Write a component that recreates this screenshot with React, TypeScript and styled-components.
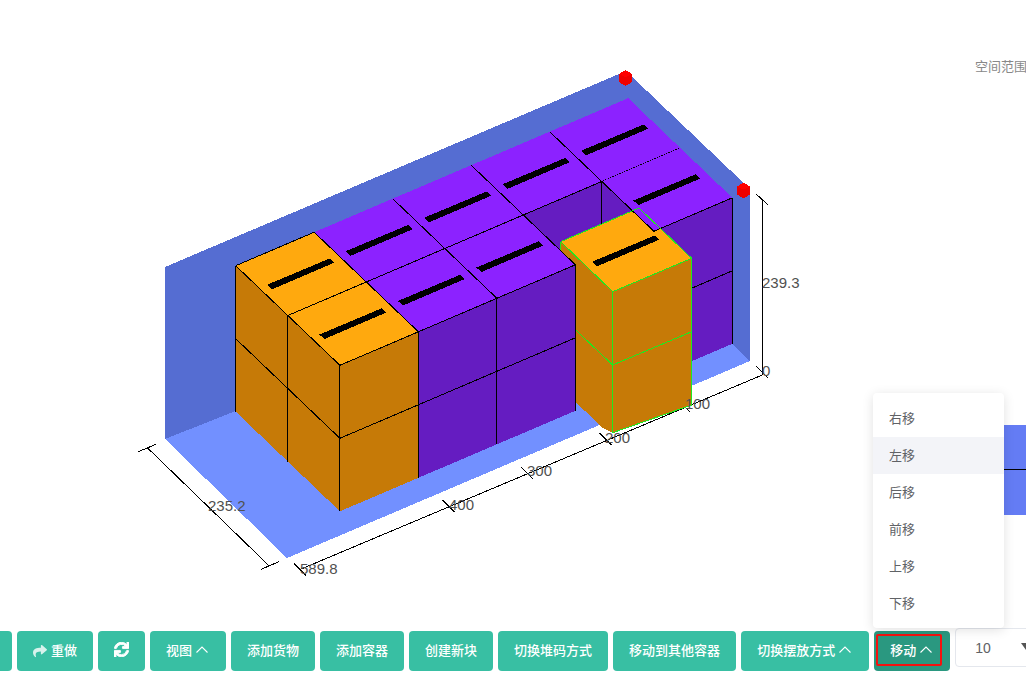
import React from "react";
import styled, { createGlobalStyle } from "styled-components";
import { FaShare, FaReply, FaSync } from "react-icons/fa";

const GlobalStyle = createGlobalStyle`
  html, body {
    margin: 0;
    padding: 0;
    background: #fff;
    font-family: "Noto Sans CJK SC", "Liberation Sans", sans-serif;
  }
`;

const Page = styled.div`
  position: relative;
  width: 1026px;
  height: 676px;
  overflow: hidden;
`;

const Stage = styled.div`
  display: flex;
  height: 631px;
`;

const Scene = styled.svg`
  flex: 0 0 975px;
  height: 631px;
  display: block;
`;

const SidePanel = styled.div`
  flex: 1;
  min-width: 0;
  display: flex;
  flex-direction: column;
`;

const RangeLabel = styled.div`
  margin-top: 57px;
  font-size: 13px;
  line-height: 18px;
  color: #888;
  white-space: nowrap;
`;

const BlueBlock = styled.div`
  margin-top: 350px;
  height: 90px;
  background: linear-gradient(#647cf4 0 44px, #000 44px 45px, #647cf4 45px);
`;

const Toolbar = styled.div`
  display: flex;
  gap: 5px;
  margin-left: -64px;
`;

const ToolButton = styled.div<{ $active?: boolean }>`
  position: relative;
  flex-shrink: 0;
  display: flex;
  align-items: center;
  box-sizing: border-box;
  height: 40px;
  padding: 0 16px 3px;
  border-radius: 4px;
  background: ${(p) => (p.$active ? "#2a9880" : "#38bfa3")};
  color: #fff;
  font-size: 13px;
  font-weight: 500;
  white-space: nowrap;

  ${(p) =>
    p.$active &&
    `
    &::after {
      content: "";
      position: absolute;
      left: 2px;
      top: 3px;
      width: 66px;
      height: 32px;
      box-sizing: border-box;
      border: 2px solid #f5120f;
      border-radius: 2px;
    }
  `}
`;

const MenuButton = styled(ToolButton)`
  padding-right: 18px;
`;

const Chevron = styled.svg`
  width: 12px;
  height: 7px;
  margin-left: 4px;
  fill: none;
  stroke: #fff;
  stroke-width: 1.1;
`;

const LeadIcon = styled.span`
  display: flex;
  margin: 3px 4px 0 0;
  font-size: 14px;
  opacity: 0.8;
`;

const SyncIcon = styled.span`
  display: flex;
  font-size: 15px;

  svg {
    stroke: #fff;
    stroke-width: 30;
  }
`;

const SizeSelect = styled.div`
  flex-shrink: 0;
  display: flex;
  align-items: center;
  box-sizing: border-box;
  width: 100px;
  height: 39px;
  margin-top: -3px;
  padding-left: 19px;
  border: 1px solid #e4e7ed;
  border-radius: 4px;
  color: #606266;
  font-family: "Liberation Sans", sans-serif;
  font-size: 14px;
`;

const Caret = styled.span`
  margin: -3px 0 0 30px;
  border-style: solid;
  border-width: 7px 5px 0;
  border-color: #555 transparent transparent;
`;

const DropMenu = styled.ul`
  position: absolute;
  left: 873px;
  top: 393px;
  width: 131px;
  margin: 0;
  padding: 7px 0 6px;
  list-style: none;
  background: #fff;
  border-radius: 4px;
  box-shadow: 0 2px 12px rgba(0, 0, 0, 0.12);
`;

const MenuItem = styled.li<{ $hover?: boolean }>`
  height: 37px;
  padding-left: 16px;
  line-height: 35px;
  font-size: 13px;
  color: #606266;
  background: ${(p) => (p.$hover ? "#f3f4f8" : "transparent")};
`;

type Pt = [number, number];

const LAYER = 73;
const pt = (i: number, j: number, down = 0): Pt => [
  235.7 + i * 78.5 + j * 52.1,
  265.7 - i * 33.5 + j * 49.8 + down,
];
const pts = (list: Pt[]) => list.map((p) => p.join(",")).join(" ");

const BAR: Pt[] = [
  [31.6, 19],
  [94.3, -7.4],
  [98.6, -3],
  [36.6, 23.6],
];

const COLORS = {
  orange: { top: "#ffa90e", side: "#c67a07" },
  purple: { top: "#8c22ff", side: "#651cc1" },
};

const Seg = ({ a, b, color = "#000" }: { a: Pt; b: Pt; color?: string }) => (
  <line x1={a[0]} y1={a[1]} x2={b[0]} y2={b[1]} stroke={color} strokeWidth={1} />
);

const TopFace = ({ i, j, kind }: { i: number; j: number; kind: "orange" | "purple" }) => {
  const o = pt(i, j);
  return (
    <>
      <polygon
        points={pts([pt(i, j), pt(i + 1, j), pt(i + 1, j + 1), pt(i, j + 1)])}
        fill={COLORS[kind].top}
      />
      <polygon points={pts(BAR.map(([x, y]) => [o[0] + x, o[1] + y] as Pt))} fill="#000" />
    </>
  );
};

const Box = ({ i, j, kind }: { i: number; j: number; kind: "orange" | "purple" }) => {
  const side = COLORS[kind].side;
  const h = LAYER * 2;
  return (
    <g>
      <polygon
        points={pts([pt(i, j), pt(i, j + 1), pt(i, j + 1, h), pt(i, j, h)])}
        fill={side}
      />
      <polygon
        points={pts([pt(i, j + 1), pt(i + 1, j + 1), pt(i + 1, j + 1, h), pt(i, j + 1, h)])}
        fill={side}
      />
      <TopFace i={i} j={j} kind={kind} />
      <Seg a={pt(i, j)} b={pt(i, j + 1)} />
      <Seg a={pt(i, j + 1)} b={pt(i + 1, j + 1)} />
      <Seg a={pt(i, j)} b={pt(i, j, h)} />
      <Seg a={pt(i, j + 1)} b={pt(i, j + 1, h)} />
      <Seg a={pt(i + 1, j + 1)} b={pt(i + 1, j + 1, h)} />
      <Seg a={pt(i, j, LAYER)} b={pt(i, j + 1, LAYER)} />
      <Seg a={pt(i, j + 1, LAYER)} b={pt(i + 1, j + 1, LAYER)} />
      {/* shared edges get painted over by the neighbour, draw them again */}
      {i < 4 && <Seg a={pt(i + 1, j)} b={pt(i + 1, j + 1)} />}
      {(kind === "orange" || j > 0) && <Seg a={pt(i, j)} b={pt(i + 1, j)} />}
    </g>
  );
};

// the box being moved, it sticks out of the row and past the floor
const MovedBox = () => {
  const green = "#1fe81f";
  const side = COLORS.orange.side;
  const t0: Pt = [560.7, 241.7];
  const t1: Pt = [639, 208];
  const t2: Pt = [691.7, 258.3];
  const t3: Pt = [612.7, 291.7];
  return {
    body: (
      <g>
        <polygon
          points={pts([t0, t3, [612.7, 432.7], [603, 428], [560.7, 388]])}
          fill={side}
        />
        <polygon points={pts([t3, t2, [691.7, 405], [612.7, 432.7]])} fill={side} />
        <polygon points={pts([t0, t1, t2, t3])} fill={COLORS.orange.top} />
        <polygon
          points={pts(BAR.map(([x, y]) => [t0[0] + x, t0[1] + y + 1] as Pt))}
          fill="#000"
        />
      </g>
    ),
    lines: (
      <g>
        <Seg a={t0} b={t1} color={green} />
        <Seg a={t1} b={t2} color={green} />
        <Seg a={t2} b={t3} color={green} />
        <Seg a={t3} b={t0} color={green} />
        <Seg a={t0} b={[560.7, 252]} color={green} />
        <Seg a={t3} b={[612.7, 432.7]} color={green} />
        <Seg a={t2} b={[691.7, 405]} color={green} />
        <Seg a={[612.7, 365]} b={[691.7, 331.7]} color={green} />
        <Seg a={[575.7, 330]} b={[612.7, 365]} color={green} />
        <Seg a={[612.7, 432.7]} b={[691.7, 405]} color={green} />
      </g>
    ),
  };
};

const Marker = ({ x, y }: { x: number; y: number }) => (
  <g>
    <polygon
      points={pts([
        [x, y - 8],
        [x + 6.5, y - 4],
        [x + 6.5, y + 4],
        [x, y + 8],
        [x - 6.5, y + 4],
        [x - 6.5, y - 4],
      ])}
      fill="#ee0000"
    />
    <polygon
      points={pts([
        [x, y - 8],
        [x + 6.5, y - 4],
        [x, y - 1],
        [x - 6.5, y - 4],
      ])}
      fill="#ff0000"
    />
  </g>
);

const DimText = styled.text`
  font-family: "Liberation Sans", sans-serif;
  font-size: 15px;
  fill: #505050;
`;

const ticks: Pt[] = [
  [762.3, 372.5],
  [684, 406],
  [605.5, 439],
  [527, 473],
  [448.7, 506],
  [300, 569.5],
];

const labels: { text: string; x: number; y: number }[] = [
  { text: "235.2", x: 208, y: 511 },
  { text: "589.8", x: 300, y: 574 },
  { text: "400", x: 449, y: 510 },
  { text: "300", x: 527, y: 476 },
  { text: "200", x: 605, y: 443 },
  { text: "100", x: 685, y: 409 },
  { text: "0", x: 762, y: 376 },
  { text: "239.3", x: 762, y: 288 },
];

const Drawing = () => {
  const moved = MovedBox();
  return (
    <Scene viewBox="0 0 975 631" shapeRendering="crispEdges">
      <polygon
        points="165,267 626,71 750,189 750,361 732,344 235.7,411 165,439"
        fill="#556dd2"
      />
      <polygon points="165,439 235.7,411 732,344 750,361 287,558" fill="#7290ff" />

      <Seg a={[147.3, 447.7]} b={[269.3, 566]} />
      <Seg a={[138.3, 451.7]} b={[156, 444.3]} />
      <Seg a={[261, 569.3]} b={[279, 561.7]} />
      <Seg a={[300, 569.5]} b={[762.3, 375]} />
      <Seg a={[762.3, 200]} b={[762.3, 375]} />
      <Seg a={[756, 194]} b={[768.3, 205]} />
      {ticks.map(([x, y]) => (
        <Seg key={x} a={[x - 6, y - 6]} b={[x + 6, y + 6]} />
      ))}

      <Box i={4} j={0} kind="purple" />
      <Box i={3} j={0} kind="purple" />
      <Box i={2} j={0} kind="purple" />
      <Box i={1} j={0} kind="purple" />
      <Box i={0} j={0} kind="orange" />
      <Box i={4} j={1} kind="purple" />
      {moved.body}
      <TopFace i={4} j={1} kind="purple" />
      <Seg a={pt(4, 1)} b={pt(4, 2)} />
      <Seg a={pt(4, 2)} b={pt(5, 2)} />
      {moved.lines}
      <Box i={2} j={1} kind="purple" />
      <Box i={1} j={1} kind="purple" />
      <Box i={0} j={1} kind="orange" />

      <Marker x={625.5} y={78} />
      <Marker x={743.5} y={190.5} />

      {labels.map((l) => (
        <DimText key={l.text} x={l.x} y={l.y}>
          {l.text}
        </DimText>
      ))}
    </Scene>
  );
};

const ArrowUp = () => (
  <Chevron viewBox="0 0 12 7">
    <path d="M0.5 6.5 L6 1 L11.5 6.5" />
  </Chevron>
);

const moveItems = ["右移", "左移", "后移", "前移", "上移", "下移"];

export default function App() {
  return (
    <Page>
      <GlobalStyle />
      <Stage>
        <Drawing />
        <SidePanel>
          <RangeLabel>空间范围</RangeLabel>
          <BlueBlock />
        </SidePanel>
      </Stage>
      <Toolbar>
        <ToolButton>
          <LeadIcon>
            <FaReply />
          </LeadIcon>
          撤销
        </ToolButton>
        <ToolButton>
          <LeadIcon>
            <FaShare />
          </LeadIcon>
          重做
        </ToolButton>
        <ToolButton>
          <SyncIcon>
            <FaSync />
          </SyncIcon>
        </ToolButton>
        <MenuButton>
          视图
          <ArrowUp />
        </MenuButton>
        <ToolButton>添加货物</ToolButton>
        <ToolButton>添加容器</ToolButton>
        <ToolButton>创建新块</ToolButton>
        <ToolButton>切换堆码方式</ToolButton>
        <ToolButton>移动到其他容器</ToolButton>
        <MenuButton>
          切换摆放方式
          <ArrowUp />
        </MenuButton>
        <MenuButton $active>
          移动
          <ArrowUp />
        </MenuButton>
        <SizeSelect>
          10
          <Caret />
        </SizeSelect>
      </Toolbar>
      <DropMenu>
        {moveItems.map((item) => (
          <MenuItem key={item} $hover={item === "左移"}>
            {item}
          </MenuItem>
        ))}
      </DropMenu>
    </Page>
  );
}
